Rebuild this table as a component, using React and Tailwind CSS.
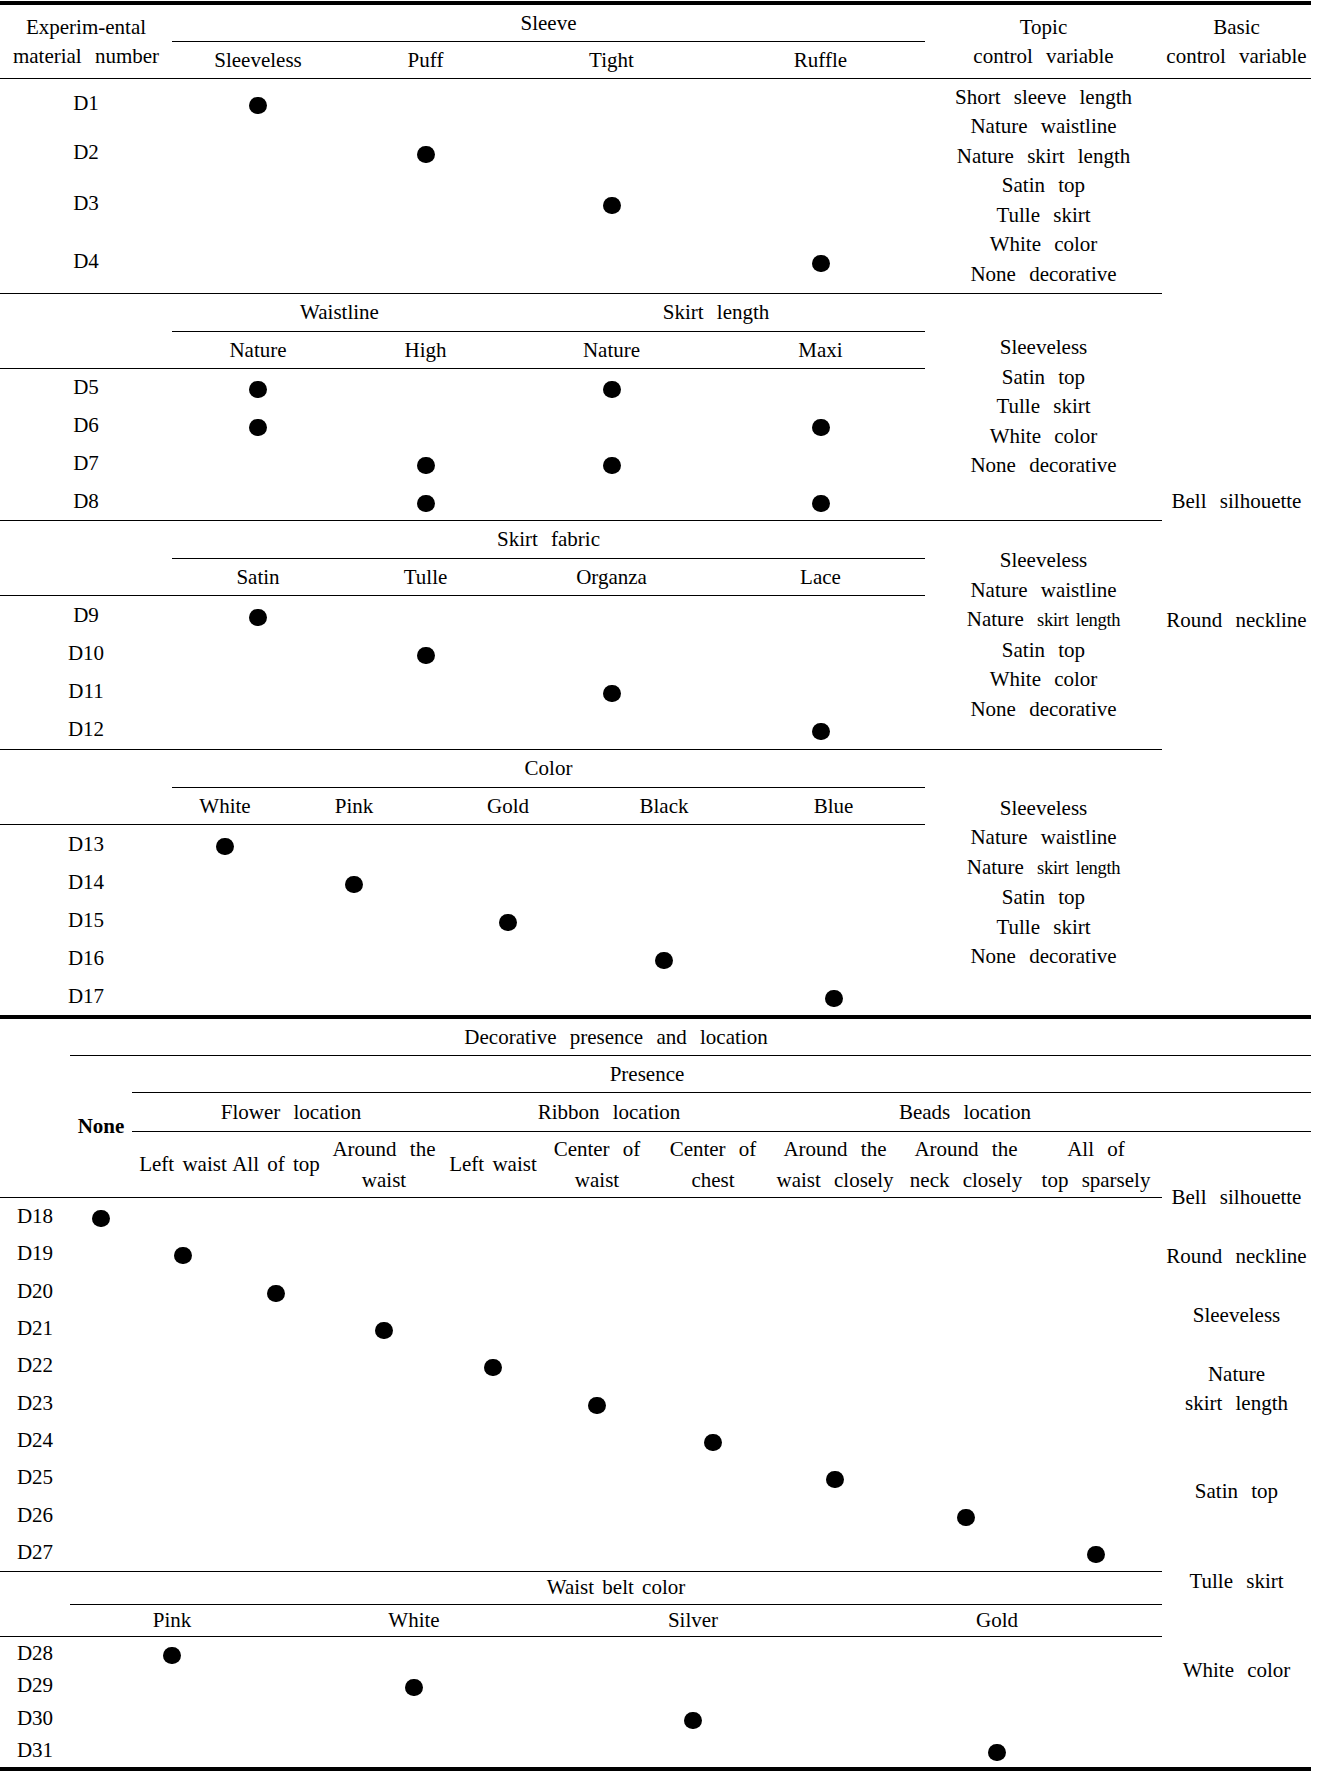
import React from 'react'

const W4 = ['w-[172px]', 'w-[163px]', 'w-[209px]', 'w-[209px]']
const W5 = ['w-[106px]', 'w-[152px]', 'w-[156px]', 'w-[156px]', 'w-[183px]']
const WB = ['w-[62px]', 'w-[102px]', 'w-[84px]', 'w-[132px]', 'w-[86px]', 'w-[122px]', 'w-[110px]', 'w-[134px]', 'w-[128px]', 'w-[132px]']
const WBelt = ['w-[204px]', 'w-[280px]', 'w-[278px]', 'w-[330px]']

const natureSkirt = (
  <>
    Nature <span className="text-[18.5px] tracking-[-0.3px] [word-spacing:3px]">skirt length</span>
  </>
)

const sections = [
  {
    groups: [['Waistline', 'w-[335px]'], ['Skirt length', 'w-[418px]']],
    cols: ['Nature', 'High', 'Nature', 'Maxi'],
    widths: W4,
    rowH: 'h-[37.75px]',
    rows: [['D5', [0, 2]], ['D6', [0, 3]], ['D7', [1, 2]], ['D8', [1, 3]]],
    topic: ['Sleeveless', 'Satin top', 'Tulle skirt', 'White color', 'None decorative'],
  },
  {
    groups: [['Skirt fabric', 'w-[753px]']],
    cols: ['Satin', 'Tulle', 'Organza', 'Lace'],
    widths: W4,
    rowH: 'h-[38.25px]',
    rows: [['D9', [0]], ['D10', [1]], ['D11', [2]], ['D12', [3]]],
    topic: ['Sleeveless', 'Nature waistline', natureSkirt, 'Satin top', 'White color', 'None decorative'],
  },
  {
    groups: [['Color', 'w-[753px]']],
    cols: ['White', 'Pink', 'Gold', 'Black', 'Blue'],
    widths: W5,
    rowH: 'h-[38px]',
    rows: [['D13', [0]], ['D14', [1]], ['D15', [2]], ['D16', [3]], ['D17', [4]]],
    topic: ['Sleeveless', 'Nature waistline', natureSkirt, 'Satin top', 'Tulle skirt', 'None decorative'],
    last: true,
  },
]

const decoRows = ['D18', 'D19', 'D20', 'D21', 'D22', 'D23', 'D24', 'D25', 'D26', 'D27']
const decoHeads = [
  ['Left waist'],
  ['All of top'],
  ['Around the', 'waist'],
  ['Left waist'],
  ['Center of', 'waist'],
  ['Center of', 'chest'],
  ['Around the', 'waist closely'],
  ['Around the', 'neck closely'],
  ['All of', 'top sparsely'],
]

const Dot = () => <span className="block w-[18px] h-[17px] rounded-full bg-black mt-[4px]" />

function Row({ label, labelW, widths, hits, h }) {
  return (
    <div className={`flex ${h}`}>
      <div className={`${labelW} flex items-center justify-center`}>{label}</div>
      {widths.map((w, i) => (
        <div key={i} className={`${w} flex items-center justify-center`}>
          {hits.includes(i) && <Dot />}
        </div>
      ))}
    </div>
  )
}

function Topic({ lines }) {
  return (
    <div className="w-[237px] flex flex-col items-center justify-center leading-[29.5px]">
      {lines.map((l, i) => (
        <div key={i} className="whitespace-nowrap">{l}</div>
      ))}
    </div>
  )
}

function Section({ s }) {
  return (
    <div className={`flex ${s.last ? '' : 'border-b border-black'}`}>
      <div className="w-[925px]">
        <div className="flex h-[38px]">
          <div className="w-[172px]" />
          <div className="w-[753px] flex border-b border-black">
            {s.groups.map(([g, w]) => (
              <div key={g} className={`${w} flex items-center justify-center`}>{g}</div>
            ))}
          </div>
        </div>
        <div className="flex h-[37px] border-b border-black">
          <div className="w-[172px]" />
          {s.cols.map((c, i) => (
            <div key={i} className={`${s.widths[i]} flex items-center justify-center`}>{c}</div>
          ))}
        </div>
        {s.rows.map(([d, hits]) => (
          <Row key={d} label={d} labelW="w-[172px]" widths={s.widths} hits={hits} h={s.rowH} />
        ))}
      </div>
      <Topic lines={s.topic} />
    </div>
  )
}

export default function App() {
  const sec1Rows = [['D1', 'h-[48px]'], ['D2', 'h-[51px]'], ['D3', 'h-[51px]'], ['D4', 'h-[64px]']]

  return (
    <div className="min-h-screen bg-white">
      <div className="w-[1311px] pt-[1px] font-['Liberation_Serif',serif] text-[21px] leading-[29px] text-black whitespace-nowrap [word-spacing:8px]">
        {/* Upper table: sleeve, waistline, fabric, color */}
        <div className="border-t-4 border-black">
          <div className="flex h-[74px] border-b border-black">
            <div className="w-[172px] flex flex-col items-center justify-center">
              <span>Experim-ental</span>
              <span>material number</span>
            </div>
            <div className="w-[753px] flex flex-col">
              <div className="h-[37px] border-b border-black flex items-center justify-center">Sleeve</div>
              <div className="flex flex-1">
                {['Sleeveless', 'Puff', 'Tight', 'Ruffle'].map((c, i) => (
                  <div key={c} className={`${W4[i]} flex items-center justify-center`}>{c}</div>
                ))}
              </div>
            </div>
            <div className="w-[237px] flex flex-col items-center justify-center">
              <span>Topic</span>
              <span>control variable</span>
            </div>
            <div className="w-[149px] flex flex-col items-center justify-center">
              <span>Basic</span>
              <span>control variable</span>
            </div>
          </div>

          <div className="flex">
            <div className="w-[1162px]">
              <div className="flex border-b border-black">
                <div className="w-[925px]">
                  {sec1Rows.map(([d, h], i) => (
                    <Row key={d} label={d} labelW="w-[172px]" widths={W4} hits={[i]} h={h} />
                  ))}
                </div>
                <Topic
                  lines={['Short sleeve length', 'Nature waistline', 'Nature skirt length', 'Satin top', 'Tulle skirt', 'White color', 'None decorative']}
                />
              </div>
              {sections.map((s, i) => (
                <Section key={i} s={s} />
              ))}
            </div>
            <div className="w-[149px] flex flex-col items-center pt-[408px]">
              <span>Bell silhouette</span>
              <span className="mt-[90px]">Round neckline</span>
            </div>
          </div>
        </div>

        {/* Lower table: decoration and waist belt */}
        <div className="flex border-y-4 border-black">
          <div className="w-[1162px]">
            <div className="flex h-[37px]">
              <div className="w-[70px]" />
              <div className="w-[1092px] border-b border-black flex items-center justify-center">
                Decorative presence and location
              </div>
            </div>
            <div className="flex h-[142px] border-b border-black">
              <div className="w-[70px]" />
              <div className="w-[62px] flex items-center justify-center font-bold">None</div>
              <div className="w-[1030px] flex flex-col">
                <div className="h-[37px] border-b border-black flex items-center justify-center">Presence</div>
                <div className="h-[39px] border-b border-black flex">
                  <div className="w-[318px] flex items-center justify-center">Flower location</div>
                  <div className="w-[318px] flex items-center justify-center">Ribbon location</div>
                  <div className="w-[394px] flex items-center justify-center">Beads location</div>
                </div>
                <div className="flex flex-1 leading-[31px]">
                  {decoHeads.map((lines, i) => (
                    <div
                      key={i}
                      className={`${WB[i + 1]} flex flex-col items-center justify-center ${lines.length === 1 ? '[word-spacing:3px]' : ''}`}
                    >
                      {lines.map((l) => (
                        <span key={l}>{l}</span>
                      ))}
                    </div>
                  ))}
                </div>
              </div>
            </div>

            <div className="border-b border-black">
              {decoRows.map((d, i) => (
                <Row key={d} label={d} labelW="w-[70px]" widths={WB} hits={[i]} h="h-[37.3px]" />
              ))}
            </div>

            <div className="flex h-[33px]">
              <div className="w-[70px]" />
              <div className="w-[1092px] border-b border-black flex items-center justify-center [word-spacing:3px]">
                Waist belt color
              </div>
            </div>
            <div className="flex h-[32px] border-b border-black">
              <div className="w-[70px]" />
              {['Pink', 'White', 'Silver', 'Gold'].map((c, i) => (
                <div key={c} className={`${WBelt[i]} flex items-center justify-center`}>{c}</div>
              ))}
            </div>
            {['D28', 'D29', 'D30', 'D31'].map((d, i) => (
              <Row key={d} label={d} labelW="w-[70px]" widths={WBelt} hits={[i]} h="h-[32.5px]" />
            ))}
          </div>

          <div className="w-[149px] flex flex-col items-center">
            <div className="w-full h-[37px] border-b border-black" />
            <div className="w-full h-[37px] border-b border-black" />
            <div className="w-full h-[39px] border-b border-black" />
            <span className="mt-[51px]">Bell silhouette</span>
            <span className="mt-[30px]">Round neckline</span>
            <span className="mt-[30px]">Sleeveless</span>
            <span className="mt-[30px]">Nature</span>
            <span>skirt length</span>
            <span className="mt-[59px]">Satin top</span>
            <span className="mt-[61px]">Tulle skirt</span>
            <span className="mt-[60px]">White color</span>
          </div>
        </div>
      </div>
    </div>
  )
}
